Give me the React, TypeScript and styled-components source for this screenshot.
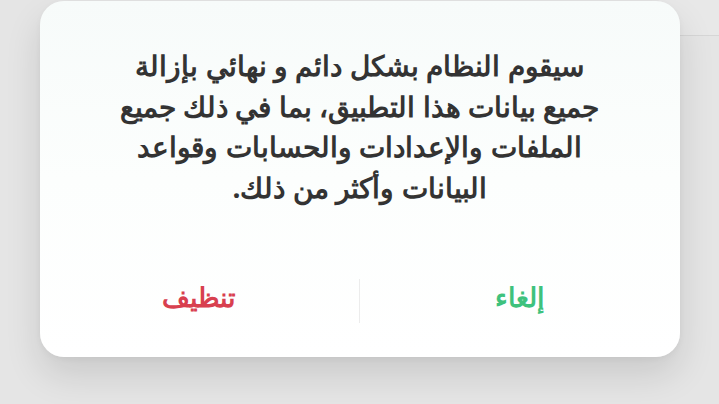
import React from "react";
import styled, { createGlobalStyle } from "styled-components";

const Global = createGlobalStyle`
  html, body { margin: 0; padding: 0; }
  body {
    width: 719px;
    height: 404px;
    overflow: hidden;
    background: #e6e6e6;
    font-family: "Noto Sans", sans-serif;
  }
`;

const Page = styled.div`
  position: relative;
  width: 719px;
  height: 404px;
  background: #e5e5e5;
`;

const Header = styled.div`
  display: flex;
  justify-content: flex-end;
  height: 35px;
`;

const HeaderEdge = styled.div`
  width: 60px;
  height: 35px;
  background: #e8e8e8;
  border-bottom: 1px solid #d6d6d6;
`;

const Overlay = styled.div`
  position: absolute;
  inset: 0;
  display: flex;
  justify-content: center;
  align-items: flex-start;
  padding-top: 1px;
`;

const Dialog = styled.div`
  width: 640px;
  height: 356px;
  box-sizing: border-box;
  border-radius: 24px;
  background: linear-gradient(180deg, #f7fbfa 0%, #fcfefd 50%, #ffffff 100%);
  box-shadow: 0 18px 36px rgba(0, 0, 0, 0.12), 0 2px 6px rgba(0, 0, 0, 0.04);
  display: flex;
  flex-direction: column;
  direction: rtl;
`;

const Message = styled.p`
  margin: 0;
  padding: 44px 40px 0;
  height: 244px;
  box-sizing: border-box;
  text-align: center;
  color: #333333;
  font-size: 28.4px;
  font-weight: bold;
  line-height: 40.5px;
`;

const Line = styled.span`
  display: block;
  white-space: nowrap;
`;

const Actions = styled.div`
  display: flex;
  align-items: center;
  height: 112px;
`;

const Divider = styled.div`
  width: 1px;
  height: 44px;
  background: #ececec;
`;

const Action = styled.button<{ $tone: "cancel" | "danger" }>`
  flex: 1;
  border: 0;
  background: transparent;
  font-family: "Noto Sans", sans-serif;
  font-size: 26.5px;
  font-weight: bold;
  padding: 0 0 8px;
  color: ${(p) => (p.$tone === "cancel" ? "#3ec27d" : "#d8404f")};
  cursor: pointer;
`;

export default function App() {
  return (
    <>
      <Global />
      <Page>
        <Header>
          <HeaderEdge />
        </Header>
        <Overlay>
          <Dialog>
            <Message>
              <Line>سيقوم النظام بشكل دائم و نهائي بإزالة</Line>
              <Line>جميع بيانات هذا التطبيق، بما في ذلك جميع</Line>
              <Line>الملفات والإعدادات والحسابات وقواعد</Line>
              <Line>البيانات وأكثر من ذلك.</Line>
            </Message>
            <Actions>
              <Action $tone="cancel">إلغاء</Action>
              <Divider />
              <Action $tone="danger">تنظيف</Action>
            </Actions>
          </Dialog>
        </Overlay>
      </Page>
    </>
  );
}
